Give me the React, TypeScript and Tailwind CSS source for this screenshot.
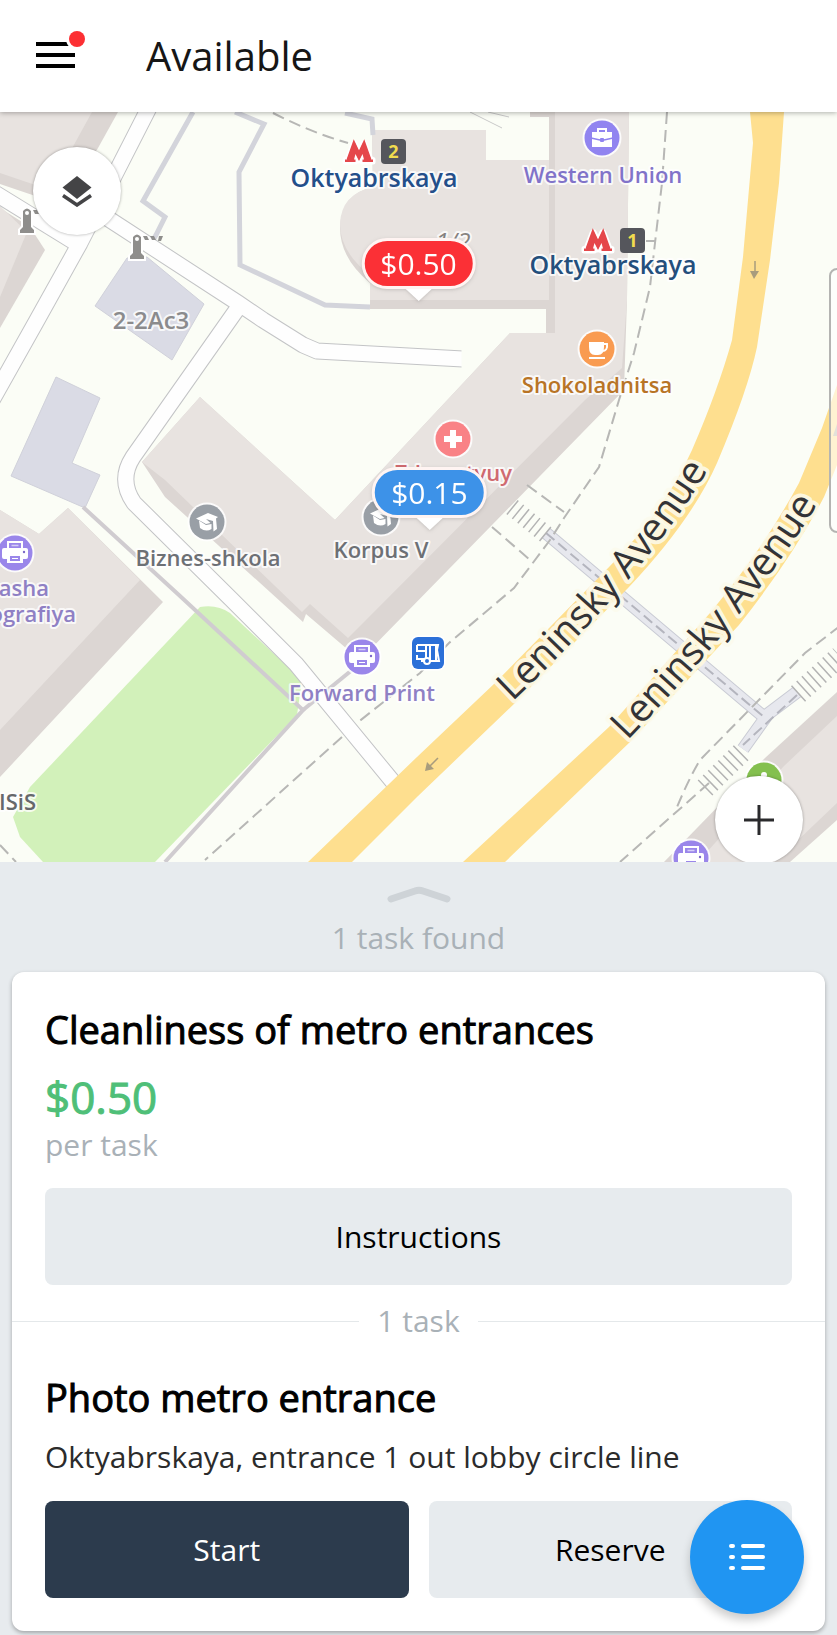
import type { ReactNode } from "react";

const ROADS = [
  "M153 100L80 243L36 322L-10 404",
  "M-10 190L76 243",
  "M98 212L238 303L263 320L303 345L317 351L463 359",
  "M240 305L133 457Q118 480 134 503L232 600L296 664L398 788",
];

const DASHED = [
  "M667 112L662 183L655 243L650 287L634 353L619 400L599 467L564 518L550 540L514 588L449 643L420 673L357 723",
  "M655 241H646",
  "M342 737L205 860",
  "M527 485L564 512",
  "M492 527L529 559",
  "M273 113Q310 132 348 143",
  "M840 626L805 653L700 760Q688 780 675 812",
  "M709 783L620 862",
  "M0 845L16 862",
];

function Poi({ x, y, color, children }: { x: number; y: number; color: string; children?: ReactNode }) {
  return (
    <g transform={`translate(${x} ${y})`}>
      <circle r="19.5" fill="#fff" fillOpacity="0.85" />
      <circle r="17.5" fill={color} />
      {children}
    </g>
  );
}

function Printer() {
  return (
    <g>
      <path d="M-7 -5V-11H7V-5" fill="none" stroke="#fff" strokeWidth="2" />
      <path d="M-3.500 -7.500H3.500" stroke="#fff" strokeWidth="1.500" strokeOpacity="0.6" />
      <path d="M-11 -5H11Q13 -5 13 -3V4Q13 6 11 6H8V10H-8V6H-11Q-13 6 -13 4V-3Q-13 -5 -11 -5Z" fill="#fff" />
      <rect x="-5" y="3" width="10" height="5" fill="#9a86ea" />
      <path d="M-3 5.500H3" stroke="#fff" strokeWidth="1" />
      <circle cx="9" cy="-1" r="1.200" fill="#7a68c8" />
    </g>
  );
}

function GradCap() {
  return (
    <g fill="#fff">
      <path d="M-11 -3.500L1 -9L11 -5L9 -3.500L10 7L6.500 9.500L6 -1L-1 -3L3.500 1L-1 2Z" />
      <path d="M-8 -1.500L-1 3L4.500 2V7Q-1 10.500 -7 6Z" />
    </g>
  );
}

function MetroSign({ x, y, line }: { x: number; y: number; line: string }) {
  return (
    <g transform={`translate(${x} ${y})`}>
      <path
        d="M0 23V20.500H2L8.500 4H10L14 12.500L18 4H19.500L26 20.500H28V23H17.500V20.500H19L17.500 15L14 22L10.500 15L9 20.500H10.500V23Z"
        fill="#e5474b"
        stroke="#fff"
        strokeWidth="5"
        paintOrder="stroke"
        strokeLinejoin="round"
      />
      <path d="M3.500 21L9 5.500L14 16L19 5.500L24.500 21" fill="none" stroke="#e5474b" strokeWidth="4" />
      <rect x="36" y="0" width="25" height="25" rx="4" fill="#55565c" />
      <text x="48.500" y="19" textAnchor="middle" fontSize="18" fontWeight="700" fill="#f1dc4e">
        {line}
      </text>
    </g>
  );
}

type LabelProps = {
  x: number;
  y: number;
  color: string;
  size?: number;
  anchor?: "middle" | "end";
  italic?: boolean;
  children: string;
};

function Label({ x, y, color, size = 22, anchor = "middle", italic = false, children }: LabelProps) {
  return (
    <text
      x={x}
      y={y}
      fill={color}
      fontSize={size}
      fontWeight={italic ? "400" : "600"}
      fontStyle={italic ? "italic" : "normal"}
      textAnchor={anchor}
      stroke="#fff"
      strokeOpacity="0.8"
      strokeWidth="4"
      strokeLinejoin="round"
      paintOrder="stroke"
    >
      {children}
    </text>
  );
}

function Barrier({ x, y }: { x: number; y: number }) {
  return (
    <g transform={`translate(${x} ${y})`}>
      <path d="M2 3Q6 -2 10 3V19L13 22V25H-1V22L2 19Z" fill="#8f8e8c" stroke="#fff" strokeWidth="4" paintOrder="stroke" />
      <circle cx="6" cy="5" r="2" fill="#fff" />
      <path d="M12 2H16L18 6H14ZM19 2H23L25 6H21ZM28 2H32L30 7H27Z" fill="#8f8e8c" />
    </g>
  );
}

function MapCanvas() {
  return (
    <svg
      viewBox="0 112 837 750"
      preserveAspectRatio="xMidYMid slice"
      className="block h-full w-full"
      role="img"
      aria-label="Map"
    >
      <rect x="0" y="112" width="837" height="750" fill="#fbfdf6" />

      <g fill="#dcd6d3">
        <path d="M0 112H118L98 148L62 205L0 184Z" />
        <path d="M0 208L30 227L45 250L0 328Z" />
        <path d="M0 510L39 534L68 508L163 602L0 777Z" />
        <path d="M837 692L765 758L664 862H790L837 820Z" />
        <path d="M372 130H486V160H549V112H629L627 300L624 390L360 660L306 614L303 622L165 497L142 462L200 397L335 520L510 333H546V309H370V283Q340 258 340 228Q341 194 373 187Z" />
        <path d="M530 112H550V117H530Z" />
      </g>
      <g fill="#e8e3e0">
        <path d="M0 112H92L70 152L50 190L0 173Z" />
        <path d="M0 206L27 232L0 297Z" />
        <path d="M0 510L39 534L68 508L140 580L0 730Z" />
        <path d="M837 716L784 766L698 862H775L837 803Z" />
        <path d="M372 130H486V160H549V300H370V275Q340 252 340 224Q341 194 373 187Z" />
        <path d="M555 112H629L627 300L622 368L585 400L366 620L348 638L310 604L302 612L165 480L142 462L200 397L335 520L510 333H555Z" />
      </g>
      <path d="M200 607Q217 604 230 613L302 680L297 715L155 862H43L20 837L13 817L30 787Z" fill="#d2f1ba" />
      <g fill="#dadbe5" stroke="#d0d1da">
        <path d="M127 258L147 257L204 304L172 360L95 306Z" />
        <path d="M56 377L100 398L72 463L100 475L85 508L11 476Z" />
      </g>

      <g fill="none" stroke="#d3d4db" strokeWidth="5">
        <path d="M193 112L143 201L165 217L156 235L147 250" />
        <path d="M235 112L264 124L239 172L240 265L325 305L370 307" />
        <path d="M345 113L372 119L373 135" />
      </g>
      <g fill="none" stroke="#d0ccd0" strokeWidth="4">
        <path d="M83 507L180 596L303 710L165 862" />
        <path d="M303 710L352 670" />
      </g>
      <path d="M470 112L502 128M488 112L509 117" stroke="#c9c9c9" fill="none" />

      <g fill="none" stroke="#c3c4c6" strokeWidth="17" strokeLinejoin="round">
        {ROADS.map((d) => (
          <path key={d} d={d} />
        ))}
      </g>
      <g fill="none" stroke="#fefefe" strokeWidth="15" strokeLinejoin="round">
        {ROADS.map((d) => (
          <path key={d} d={d} />
        ))}
      </g>
      <path d="M463 349V369" stroke="#fbfdf6" strokeWidth="3" />

      <g fill="none">
        <path d="M546 533L764 717L797 692M768 714L743 749" stroke="#c9cbd4" strokeWidth="13" />
        <path d="M546 533L764 717L797 692M768 714L743 749" stroke="#e7e8ee" strokeWidth="11" />
        <path d="M546 533L764 717M797 695L743 745" stroke="#b4b5be" strokeWidth="2" strokeDasharray="11 5" />
        <path d="M512 507L549 537" stroke="#b3b3b3" strokeWidth="18" strokeDasharray="1.500 5.500" />
        <path d="M705 788L744 750" stroke="#b3b3b3" strokeWidth="21" strokeDasharray="1.500 5.500" />
        <path d="M798 694L840 656" stroke="#b3b3b3" strokeWidth="21" strokeDasharray="1.500 5.500" />
      </g>
      <g fill="none" stroke="#b7b7b5" strokeWidth="2" strokeDasharray="12 6">
        {DASHED.map((d) => (
          <path key={d} d={d} />
        ))}
      </g>

      <g fill="#fedf8f">
        <path d="M750 112L753 143L743 257L732 340Q718 390 692 450Q665 510 610 566L495 683L417 757L308 862H352L417 797L515 703L629 587Q692 520 717 463Q748 390 757 347L770 260L779 183L784 112Z" />
        <path d="M837 385L822 428L799 483Q764 548 710 613L609 727L463 862H505L630 742L739 625Q792 558 824 497L837 465Z" />
      </g>
      <g fill="none" stroke="#a89c7d" strokeWidth="1.500">
        <path d="M755 261V273" />
        <path d="M438 758L430 766" />
      </g>
      <path d="M750 271H759L754 279ZM425 771L427 762L434 769Z" fill="#a89c7d" />
      <path d="M833 436L837 424V436Z" fill="#b9b4a4" />

      <path id="avenue-west" d="M512 702Q656 566 722 446" fill="none" />
      <path id="avenue-east" d="M627 741Q770 592 834 476" fill="none" />
      <g
        fontSize="39"
        fill="#333336"
        stroke="#fcfbed"
        strokeOpacity="0.85"
        strokeWidth="8"
        strokeLinejoin="round"
        paintOrder="stroke"
      >
        <text>
          <textPath href="#avenue-west">Leninsky Avenue</textPath>
        </text>
        <text>
          <textPath href="#avenue-east">Leninsky Avenue</textPath>
        </text>
      </g>

      <Barrier x={21} y={208} />
      <Barrier x={131} y={234} />

      <Poi x={602} y={138} color="#9184f0">
        <path d="M-10 -6H10V9H-10Z" fill="#fff" />
        <path d="M-4 -6V-9H4V-6" fill="none" stroke="#fff" strokeWidth="2" />
        <path d="M-11 0L-2 2H2L11 0" fill="none" stroke="#9184f0" strokeWidth="1.500" />
        <rect x="-2" y="0" width="4" height="4" rx="1" fill="#9184f0" />
      </Poi>
      <Poi x={597} y={349} color="#f99b51">
        <path d="M-8 -7H7V-2Q7 6 1 6H-2Q-8 6 -8 -2Z" fill="#fff" />
        <path d="M6 -5H10Q11 2 5 2" fill="none" stroke="#fff" strokeWidth="2" />
        <path d="M-8 9H8" stroke="#fff" strokeWidth="2" />
      </Poi>
      <Poi x={453} y={439} color="#f98286">
        <path d="M0 -9V9M-9 0H9" stroke="#fff" strokeWidth="6" />
      </Poi>
      <Poi x={207} y={522} color="#999fa6">
        <GradCap />
      </Poi>
      <Poi x={381} y={517} color="#999fa6">
        <GradCap />
      </Poi>
      <Poi x={15} y={553} color="#9a86ea">
        <Printer />
      </Poi>
      <Poi x={362} y={657} color="#9a86ea">
        <Printer />
      </Poi>
      <Poi x={691} y={858} color="#9a86ea">
        <Printer />
      </Poi>
      <Poi x={764} y={780} color="#84c04f">
        <circle cy="-5" r="3" fill="#fff" />
      </Poi>

      <g transform="translate(412 637)">
        <rect x="-1.500" y="-1.500" width="35" height="35" rx="7" fill="#fff" />
        <rect width="32" height="32" rx="6" fill="#2b70d8" />
        <path d="M5 8H26L25 13L27 24H24M5 8V14H14V22H5V18M14 8V14M18 8V24H24V9M9 24H21" fill="none" stroke="#fff" strokeWidth="2" />
        <circle cx="15" cy="24" r="3" fill="#2b70d8" stroke="#fff" strokeWidth="2" />
      </g>

      <MetroSign x={345} y={139} line="2" />
      <MetroSign x={584} y={228} line="1" />

      <Label x={374} y={187} color="#244f8a" size={25}>Oktyabrskaya</Label>
      <Label x={613} y={274} color="#244f7c" size={25}>Oktyabrskaya</Label>
      <Label x={603} y={183} color="#8173c9">Western Union</Label>
      <Label x={597} y={393} color="#b87426">Shokoladnitsa</Label>
      <Label x={151} y={329} color="#8b8b8d" size={24}>2-2Ac3</Label>
      <Label x={208} y={566} color="#6d7075">Biznes-shkola</Label>
      <Label x={381} y={558} color="#6d7075">Korpus V</Label>
      <Label x={362} y={701} color="#8f80c4">Forward Print</Label>
      <Label x={49} y={596} color="#8f80c4" anchor="end">Nasha</Label>
      <Label x={76} y={622} color="#8f80c4" anchor="end">Tipografiya</Label>
      <Label x={36} y={810} color="#66686b" anchor="end">MISiS</Label>
      <Label x={512} y={481} color="#d06a70" anchor="end">Zdravstvuy</Label>
      <Label x={453} y={250} color="#86827f" size={24} italic>1/2</Label>
    </svg>
  );
}

function PriceMarker({ price, className, pill }: { price: string; className: string; pill: string }) {
  return (
    <button type="button" className={`absolute flex -translate-x-1/2 flex-col items-center drop-shadow ${className}`}>
      <span
        className={`flex h-[51px] items-center rounded-full border-3 border-[#fff4f2] px-4 text-[30px] leading-none text-white ${pill}`}
      >
        {price}
      </span>
      <svg width="26" height="12" viewBox="0 0 26 12" aria-hidden="true">
        <path d="M0 0H26L13 12Z" fill="#fff" />
      </svg>
    </button>
  );
}

export default function App() {
  return (
    <div className="min-h-screen bg-[#e7ebee] font-['Open_Sans','Noto_Sans',sans-serif] text-black">
      <header className="relative z-10 flex h-28 items-center gap-[60px] bg-white pl-9 shadow-[0_1px_5px_rgba(0,0,0,0.3)]">
        <button type="button" aria-label="Open menu">
          <svg width="50" height="50" viewBox="0 0 50 50" aria-hidden="true">
            <path d="M0 13H39M0 24H39M0 35H39" stroke="#000" strokeWidth="4" />
            <circle cx="41" cy="8" r="11" fill="#fff" />
            <circle cx="41" cy="8" r="8" fill="#fc2f33" />
          </svg>
        </button>
        <h1 className="text-[40px] leading-[52px] text-[#161616]">Available</h1>
      </header>

      <section aria-label="Task map" className="relative h-[750px] overflow-hidden">
        <MapCanvas />
        <button
          type="button"
          aria-label="Map layers"
          className="absolute top-[35px] left-[33px] flex size-[88px] items-center justify-center rounded-full bg-white shadow-[0_0_3px_rgba(0,0,0,0.35)]"
        >
          <svg width="30" height="32" viewBox="0 0 30 32" aria-hidden="true">
            <path d="M15 1L29.500 12.500L15 24L0.500 12.500Z" fill="#444446" />
            <path d="M1 20.500L15 30L29 20.500" fill="none" stroke="#444446" strokeWidth="3.500" />
          </svg>
        </button>
        <PriceMarker price="$0.50" className="top-[126px] left-1/2" pill="bg-[#fb3036]" />
        <PriceMarker price="$0.15" className="top-[355px] left-[51.300%]" pill="bg-[#3d92e8]" />
        <div className="absolute top-[156px] -right-4 h-[265px] w-6 rounded-lg border-2 border-[#b4b4b2] bg-white/60" />
        <button
          type="button"
          aria-label="Zoom in"
          className="absolute top-[664px] right-[34px] flex size-[88px] items-center justify-center rounded-full bg-white shadow-[0_0_3px_rgba(0,0,0,0.35)]"
        >
          <svg width="32" height="32" viewBox="0 0 32 32" aria-hidden="true">
            <path d="M16 1V31M1 16H31" stroke="#2a2a2c" strokeWidth="3" />
          </svg>
        </button>
      </section>

      <main className="flex flex-col px-3 pt-6 pb-1">
        <button type="button" className="flex flex-col items-center gap-4 text-[#a9b1b7]">
          <svg width="64" height="18" viewBox="0 0 64 18" aria-hidden="true">
            <path d="M4 13L28 5Q32 3.500 36 5L60 13" fill="none" stroke="#ced3d7" strokeWidth="7" strokeLinecap="round" />
          </svg>
          <span className="text-[30px] leading-9">1 task found</span>
        </button>

        <article className="mt-4 rounded-xl bg-white pb-[33px] shadow-[0_2px_4px_rgba(0,0,0,0.3)]">
          <div className="px-[33px] pt-[31px]">
            <h2 className="text-[38px] leading-[52px] [-webkit-text-stroke:1px_currentColor]">
              Cleanliness of metro entrances
            </h2>
            <p className="mt-3 text-[44px] leading-[60px] text-[#4fbf78] [-webkit-text-stroke:1px_currentColor]">
              $0.50
            </p>
            <p className="text-[30px] leading-9 text-[#a9b1b7]">per task</p>
            <button type="button" className="mt-[25px] h-[97px] w-full rounded-lg bg-[#e7ebee] text-[30px] leading-9">
              Instructions
            </button>
          </div>
          <div className="mt-[18px] flex items-center gap-[18px]">
            <span className="h-px flex-1 bg-[#e4e8ea]" />
            <span className="text-[30px] leading-9 text-[#a9b1b7]">1 task</span>
            <span className="h-px flex-1 bg-[#e4e8ea]" />
          </div>
          <div className="px-[33px] pt-8">
            <h3 className="text-[38px] leading-[52px] [-webkit-text-stroke:1px_currentColor]">Photo metro entrance</h3>
            <p className="mt-4 text-[30px] leading-9 text-[#2b2b2b]">Oktyabrskaya, entrance 1 out lobby circle line</p>
            <div className="mt-[26px] grid grid-cols-2 gap-5 text-[30px] leading-9">
              <button type="button" className="h-[97px] rounded-lg bg-[#2c3b4d] text-white">
                Start
              </button>
              <button type="button" className="h-[97px] rounded-lg bg-[#e7ebee]">
                Reserve
              </button>
            </div>
          </div>
        </article>
      </main>

      <button
        type="button"
        aria-label="Show as list"
        className="fixed right-[33px] bottom-[21px] flex size-[114px] items-center justify-center rounded-full bg-[#2095f2] shadow-[0_6px_10px_rgba(0,0,0,0.2)]"
      >
        <svg width="38" height="30" viewBox="0 0 38 30" aria-hidden="true">
          <path
            d="M3 4H5M3 15H5M3 26H5M15 4H35M15 15H35M15 26H35"
            stroke="#fff"
            strokeWidth="4"
            strokeLinecap="round"
          />
        </svg>
      </button>
    </div>
  );
}
